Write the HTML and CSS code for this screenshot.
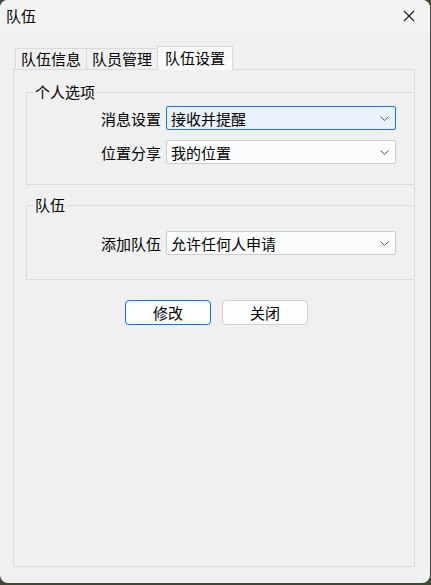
FILE: index.html
```html
<!DOCTYPE html>
<html lang="zh-CN">
<head>
  <meta charset="UTF-8" />
  <title>队伍</title>
  <link rel="stylesheet" href="styles.css">
</head>
<body>

  <div class="window">
    <div class="titlebar">
      <span class="title">队伍</span>
      <svg class="closeBtn" width="12" height="12" viewBox="0 0 12 12">
        <path d="M1 1 L11 11 M11 1 L1 11" stroke="#1a1a1a" stroke-width="1.1" fill="none" />
      </svg>
    </div>

    <div class="tabs">
      <div class="tab">队伍信息</div>
      <div class="tab">队员管理</div>
      <div class="tab active">队伍设置</div>
    </div>

    <div class="panel">
      <fieldset class="group group1">
        <legend>个人选项</legend>
        <div class="row">
          <label>消息设置</label>
          <div class="combo focused">
            <span>接收并提醒</span>
            <svg width="9" height="5" viewBox="0 0 9 5"><path d="M0.5 0.5 L4.5 4.5 L8.5 0.5" stroke="#555" fill="none" /></svg>
          </div>
        </div>
        <div class="row">
          <label>位置分享</label>
          <div class="combo">
            <span>我的位置</span>
            <svg width="9" height="5" viewBox="0 0 9 5"><path d="M0.5 0.5 L4.5 4.5 L8.5 0.5" stroke="#555" fill="none" /></svg>
          </div>
        </div>
      </fieldset>

      <fieldset class="group group2">
        <legend>队伍</legend>
        <div class="row">
          <label>添加队伍</label>
          <div class="combo">
            <span>允许任何人申请</span>
            <svg width="9" height="5" viewBox="0 0 9 5"><path d="M0.5 0.5 L4.5 4.5 L8.5 0.5" stroke="#555" fill="none" /></svg>
          </div>
        </div>
      </fieldset>

      <div class="buttons">
        <button class="btn primary">修改</button>
        <button class="btn">关闭</button>
      </div>
    </div>
  </div>

</body>
</html>
```

FILE: styles.css
```css
html, body {
  margin: 0;
  padding: 0;
}

body {
  width: 431px;
  height: 585px;
  overflow: hidden;
  background-color: #3e4838;
  font-family: "Noto Sans CJK SC", "Noto Sans", sans-serif;
  font-size: 15px;
  color: #000;
}

.window {
  width: 430px;
  height: 583px;
  background-color: #f0f0f0;
  border-radius: 8px;
  overflow: hidden;
  display: flex;
  flex-direction: column;
}

.titlebar {
  height: 32px;
  background-color: #f3f3f3;
  display: flex;
  align-items: center;
  justify-content: space-between;
  padding: 0 15px 0 6px;
  box-sizing: border-box;
}

.title {
  font-size: 15px;
  line-height: 18px;
}

.closeBtn {
  display: block;
}

.tabs {
  display: flex;
  align-items: flex-end;
  height: 24px;
  margin-top: 14px;
  padding-left: 15px;
  position: relative;
  z-index: 1;
}

.tab {
  height: 21px;
  line-height: 20px;
  padding: 0 5px;
  margin-bottom: 1px;
  border: 1px solid #dadada;
  border-bottom: none;
  border-right: none;
  box-sizing: border-box;
  background-color: #f0f0f0;
}

.tab.active {
  height: 24px;
  line-height: 22px;
  margin-bottom: 0;
  padding: 0 7px;
  background-color: #f9f9f9;
  border-right: 1px solid #dadada;
}

.panel {
  margin: -1px 15px 0 13px;
  height: 498px;
  border: 1px solid #dadada;
  box-sizing: border-box;
  padding: 13px 0 0 12px;
}

.group {
  margin: 0 -1px 0 0;
  padding: 5px 0 20px 0;
  border: 1px solid #dcdcdc;
  min-width: 0;
}

.group legend {
  margin-left: 6px;
  padding: 0 2px;
  line-height: 18px;
}

.group2 {
  margin-top: 11px;
  padding-top: 17px;
  padding-bottom: 24px;
}

.row {
  display: flex;
  align-items: center;
  gap: 5px;
}

.row + .row {
  margin-top: 10px;
}

.row label {
  width: 134px;
  text-align: right;
}

.combo {
  width: 230px;
  height: 24px;
  box-sizing: border-box;
  border: 1px solid #cdcdcd;
  border-radius: 2px;
  background-color: #fbfcfe;
  display: flex;
  align-items: center;
  justify-content: space-between;
  padding: 0 6px 0 4px;
}

.combo svg {
  display: block;
}

.combo.focused {
  border-color: #1c74d0;
  background-color: #eaf2fc;
}

.buttons {
  display: flex;
  gap: 11px;
  margin-top: 20px;
  padding-left: 99px;
}

.btn {
  width: 86px;
  height: 25px;
  font-family: inherit;
  font-size: 15px;
  line-height: 18px;
  padding: 0;
  background-color: #fdfdfd;
  border: 1px solid #d0d0d0;
  border-radius: 4px;
  color: #000;
}

.btn.primary {
  border-color: #1a72cc;
}
```
